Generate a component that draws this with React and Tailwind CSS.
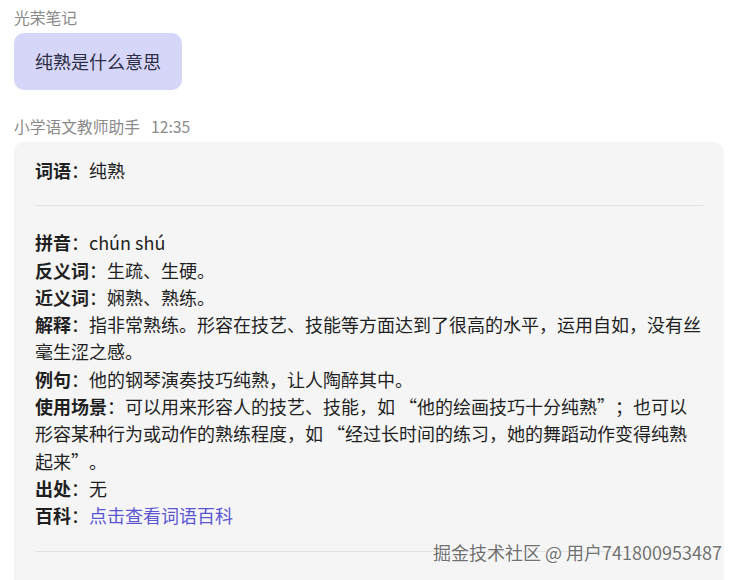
import React from "react";

const Lq = () => <span className="inline-block w-[18px] text-right">“</span>;
const Rq = () => <span className="inline-block w-[18px] text-left">”</span>;

const rows = [
  { label: "拼音", text: "chún shú" },
  { label: "反义词", text: "生疏、生硬。" },
  { label: "近义词", text: "娴熟、熟练。" },
  { label: "解释", text: "指非常熟练。形容在技艺、技能等方面达到了很高的水平，运用自如，没有丝毫生涩之感。" },
  { label: "例句", text: "他的钢琴演奏技巧纯熟，让人陶醉其中。" },
  {
    label: "使用场景",
    text: (
      <>
        可以用来形容人的技艺、技能，如 <Lq />他的绘画技巧十分纯熟<Rq />；也可以形容某种行为或动作的熟练程度，如 <Lq />经过长时间的练习，她的舞蹈动作变得纯熟起来<Rq />。
      </>
    ),
  },
  { label: "出处", text: "无" },
];

export default function App() {
  return (
    <div
      className="relative h-[580px] w-[739px] overflow-hidden bg-white pl-[14px] pt-[10px]"
      style={{ fontFamily: '"Noto Sans CJK SC", "Noto Sans", sans-serif' }}
    >
      {/* user */}
      <div className="text-[15.75px] leading-[16px] text-[#8a8a8a]">光荣笔记</div>
      <div className="mt-[7px] inline-flex h-[57px] items-center rounded-[10px] bg-[#d6d7f8] px-[21px] text-[18px] text-[#2d2e45]">
        纯熟是什么意思
      </div>

      {/* assistant */}
      <div className="mt-[29px] flex items-center gap-[11px] text-[15.75px] leading-[16px] text-[#8a8a8a]">
        <span>小学语文教师助手</span>
        <span>12:35</span>
      </div>
      <div className="mt-[7px] w-[710px] rounded-[10px] bg-[#f5f5f5] px-[21px] pb-[40px] pt-[15px] text-[18px] leading-[27.3px] text-[#1f1f1f]">
        <div>
          <span className="font-bold">词语</span>：纯熟
        </div>
        <div className="mb-[23px] mt-[21px] h-px bg-[#e2e2e2]" />
        {rows.map((r) => (
          <div key={r.label}>
            <span className="font-bold">{r.label}</span>：{r.text}
          </div>
        ))}
        <div>
          <span className="font-bold">百科</span>：<span className="text-[#5a56d2]">点击查看词语百科</span>
        </div>
        <div className="mt-[21px] h-px bg-[#e2e2e2]" />
      </div>

      {/* watermark */}
      <div className="absolute right-[17px] top-[540px] text-[18px] leading-[24px] text-[#707070] [text-shadow:0_0_2px_#fff,0_0_2px_#fff]">
        掘金技术社区 @ 用户741800953487
      </div>
    </div>
  );
}
